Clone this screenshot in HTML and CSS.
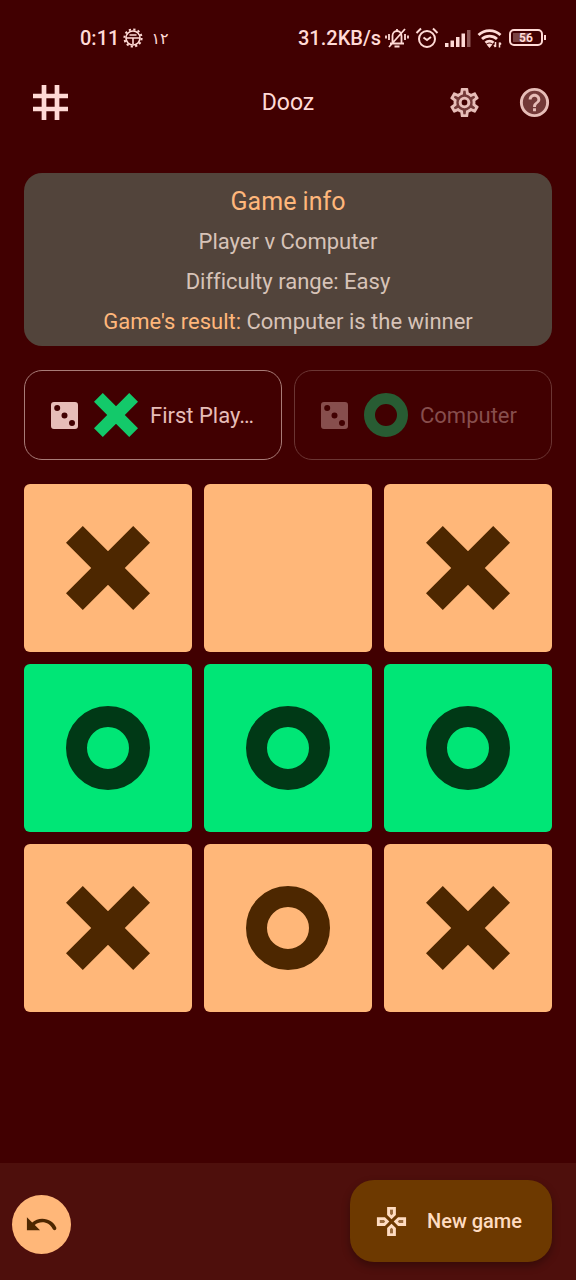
FILE: index.html
```html
<!DOCTYPE html>
<html lang="en">
<head>
<meta charset="utf-8">
<meta name="viewport" content="width=device-width, initial-scale=1">
<title>Dooz</title>
<link rel="stylesheet" href="styles.css">
</head>
<body>
<svg class="defs" aria-hidden="true">
  <symbol id="cross" viewBox="0 0 100 100"><path fill="currentColor" d="M20 0 50 30 80 0 100 20 70 50 100 80 80 100 50 70 20 100 0 80 30 50 0 20z"/></symbol>
  <symbol id="ring" viewBox="0 0 100 100"><circle cx="50" cy="50" r="37.5" fill="none" stroke="currentColor" stroke-width="25"/></symbol>
  <symbol id="dice" viewBox="0 0 27 27"><path fill="currentColor" fill-rule="evenodd" d="M3 0h21a3 3 0 0 1 3 3v21a3 3 0 0 1-3 3H3a3 3 0 0 1-3-3V3a3 3 0 0 1 3-3zM3.200 6a3 3 0 1 0 6 0a3 3 0 1 0-6 0zM10.500 13.500a3 3 0 1 0 6 0a3 3 0 1 0-6 0zM18 21a3 3 0 1 0 6 0a3 3 0 1 0-6 0z"/></symbol>
</svg>

<div class="status">
  <div class="status-group">
    <span class="clock">0:11</span>
    <svg class="status-gear" viewBox="0 0 20 20" fill="none" stroke="currentColor">
      <circle cx="10" cy="10" r="7" stroke-width="1.600"/>
      <circle cx="10" cy="10" r="8.600" stroke-width="2" stroke-dasharray="2.200 2.303"/>
      <path stroke-width="1.600" d="M3 10h14M10 10v6M6.500 7h7"/>
    </svg>
    <span class="date">۱۲</span>
  </div>
  <div class="status-group status-end">
    <span class="clock">31.2KB/s</span>
    <svg class="bell" viewBox="0 0 24 22" fill="none" stroke="currentColor" stroke-width="1.800">
      <path d="M5 16.500h14M7.500 16V9a4.500 5 0 0 1 9 0v7M12 4V2M4 20 20 2"/>
      <path d="M9.500 19.500h5" stroke-width="2"/>
      <path d="M4 7v6M1 8.500v3M20 7v6M23 8.500v3"/>
    </svg>
    <svg class="alarm" viewBox="0 0 24 22" fill="none" stroke="currentColor" stroke-width="2">
      <circle cx="12" cy="12" r="8"/>
      <path d="M1.500 6 6 1.500M22.500 6 18 1.500M8.500 10.500 12 13l4-3"/>
    </svg>
    <svg class="signal" viewBox="0 0 26 18" fill="currentColor">
      <path d="M0 14h3.500v4H0zM5.500 11.500H9V18H5.500zM11 8h3.500v10H11zM16.500 4.500H20V18h-3.500z"/>
      <path opacity=".4" d="M22 1h3.500v17H22z"/>
    </svg>
    <svg class="wifi" viewBox="0 0 26 20" fill="none" stroke="currentColor" stroke-width="2.800">
      <path d="M1.500 7a16 16 0 0 1 22 0M5 11a11 11 0 0 1 15 0M8.500 14.800a6 6 0 0 1 8 0"/>
      <path d="m9.500 16.500 3 3.500 3-3.500q-3-2-6 0z" fill="currentColor" stroke="none"/>
      <path d="M18.500 14v5M22.500 14.500v5M17 17l1.500 2M24 16.500l-1.500-2" stroke-width="1.500"/>
    </svg>
    <svg class="battery" viewBox="0 0 37 18">
      <rect x="1" y="1" width="32" height="15" rx="4" fill="none" stroke="currentColor" stroke-width="2"/>
      <rect x="4" y="4" width="15" height="9" fill="currentColor" opacity=".3"/>
      <path d="M35 6h2v5h-2z" fill="currentColor"/>
      <text x="17" y="13" text-anchor="middle" class="battery-text">56</text>
    </svg>
  </div>
</div>

<header class="appbar">
  <svg class="logo" viewBox="0 0 35 35" stroke="currentColor" stroke-width="4.700" role="img" aria-label="Dooz logo"><path d="M11 0v35M24 0v35M0 11h35M0 24h35"/></svg>
  <h1 class="title">Dooz</h1>
  <div class="actions">
    <button class="icon-button" aria-label="Settings">
      <svg class="icon" viewBox="0 0 24 24" fill="currentColor" fill-rule="evenodd">
        <path opacity=".3" d="M17.450 11.270c.04.31.05.52.05.73 0 .21-.02.43-.05.73l-.14 1.130.89.7 1.080.84-.7 1.210-1.270-.51-1.040-.42-.9.68c-.43.32-.84.56-1.250.73l-1.060.43-.16 1.130-.2 1.350h-1.400l-.19-1.350-.16-1.130-1.060-.43c-.43-.18-.83-.41-1.230-.71l-.91-.7-1.060.43-1.270.51-.7-1.210 1.080-.84.89-.7-.14-1.130c-.03-.31-.05-.54-.05-.74s.02-.43.05-.73l.14-1.130-.89-.7-1.080-.84.7-1.210 1.270.51 1.040.42.9-.68c.43-.32.84-.56 1.250-.73l1.060-.43.16-1.130.2-1.350h1.390l.19 1.350.16 1.130 1.060.43c.43.18.83.41 1.230.71l.91.7 1.060-.43 1.270-.51.7 1.210-1.070.85-.89.7zM10 12a2 2 0 1 0 4 0a2 2 0 1 0-4 0z"/>
        <path d="M19.430 12.980c.04-.32.07-.64.07-.98 0-.34-.03-.66-.07-.98l2.110-1.650c.19-.15.24-.42.12-.64l-2-3.460c-.09-.16-.26-.25-.44-.25-.06 0-.12.01-.17.03l-2.490 1c-.52-.4-1.080-.73-1.690-.98l-.38-2.650C14.460 2.180 14.250 2 14 2h-4c-.25 0-.46.18-.49.42l-.38 2.650c-.61.25-1.170.59-1.690.98l-2.490-1c-.06-.02-.12-.03-.18-.03-.17 0-.34.09-.43.25l-2 3.460c-.13.22-.07.49.12.64l2.110 1.650c-.04.32-.07.65-.07.98 0 .33.03.66.07.98l-2.110 1.650c-.19.15-.24.42-.12.64l2 3.460c.09.16.26.25.44.25.06 0 .12-.01.17-.03l2.490-1c.52.4 1.080.73 1.690.98l.38 2.650c.03.24.24.42.49.42h4c.25 0 .46-.18.49-.42l.38-2.650c.61-.25 1.170-.59 1.690-.98l2.490 1c.06.02.12.03.18.03.17 0 .34-.09.43-.25l2-3.460c.12-.22.07-.49-.12-.64l-2.110-1.650zM17.450 11.270c.04.31.05.52.05.73 0 .21-.02.43-.05.73l-.14 1.130.89.7 1.080.84-.7 1.210-1.270-.51-1.040-.42-.9.68c-.43.32-.84.56-1.250.73l-1.060.43-.16 1.130-.2 1.350h-1.400l-.19-1.350-.16-1.130-1.060-.43c-.43-.18-.83-.41-1.230-.71l-.91-.7-1.060.43-1.270.51-.7-1.210 1.080-.84.89-.7-.14-1.130c-.03-.31-.05-.54-.05-.74s.02-.43.05-.73l.14-1.130-.89-.7-1.080-.84.7-1.210 1.270.51 1.040.42.9-.68c.43-.32.84-.56 1.250-.73l1.060-.43.16-1.130.2-1.350h1.390l.19 1.350.16 1.130 1.060.43c.43.18.83.41 1.230.71l.91.7 1.060-.43 1.270-.51.7 1.210-1.070.85-.89.7z"/>
        <circle cx="12" cy="12" r="3" fill="none" stroke="currentColor" stroke-width="2"/>
      </svg>
    </button>
    <button class="icon-button" aria-label="Help">
      <svg class="icon" viewBox="0 0 24 24" fill="currentColor">
        <circle cx="12" cy="12" r="8.500" opacity=".3"/>
        <circle cx="12" cy="12" r="9" fill="none" stroke="currentColor" stroke-width="2"/>
        <path d="M11 16h2v2h-2zM12 6c-2.210 0-4 1.790-4 4h2c0-1.100.9-2 2-2s2 .9 2 2c0 2-3 1.750-3 5h2c0-2.250 3-2.500 3-5 0-2.210-1.790-4-4-4z"/>
      </svg>
    </button>
  </div>
</header>

<main class="content">
  <section class="info">
    <h2 class="info-title">Game info</h2>
    <p class="info-line">Player v Computer</p>
    <p class="info-line">Difficulty range: Easy</p>
    <p class="info-line"><span class="accent">Game's result:</span> Computer is the winner</p>
  </section>

  <section class="players">
    <div class="player">
      <svg class="dice"><use href="#dice"/></svg>
      <svg class="mark"><use href="#cross"/></svg>
      <span class="player-name">First Play…</span>
    </div>
    <div class="player player-idle">
      <svg class="dice"><use href="#dice"/></svg>
      <svg class="mark"><use href="#ring"/></svg>
      <span class="player-name">Computer</span>
    </div>
  </section>

  <section class="board" aria-label="Board">
    <button class="cell" aria-label="X"><svg class="piece"><use href="#cross"/></svg></button>
    <button class="cell" aria-label="Empty"></button>
    <button class="cell" aria-label="X"><svg class="piece"><use href="#cross"/></svg></button>
    <button class="cell cell-win" aria-label="O"><svg class="piece"><use href="#ring"/></svg></button>
    <button class="cell cell-win" aria-label="O"><svg class="piece"><use href="#ring"/></svg></button>
    <button class="cell cell-win" aria-label="O"><svg class="piece"><use href="#ring"/></svg></button>
    <button class="cell" aria-label="X"><svg class="piece"><use href="#cross"/></svg></button>
    <button class="cell" aria-label="O"><svg class="piece"><use href="#ring"/></svg></button>
    <button class="cell" aria-label="X"><svg class="piece"><use href="#cross"/></svg></button>
  </section>
</main>

<footer class="bottombar">
  <button class="undo" aria-label="Undo">
    <svg class="icon" viewBox="0 0 24 24" fill="currentColor"><path d="M12.500 8c-2.650 0-5.050.99-6.900 2.600L2 7v9h9l-3.620-3.620c1.390-1.160 3.160-1.880 5.120-1.880 3.200 0 5.900 1.850 7.200 4.600.8 1.600 3 .6 2.400-1C20.700 10.500 17 8 12.500 8z"/></svg>
  </button>
  <button class="new-game">
    <svg class="icon" viewBox="0 0 24 24" fill="currentColor" fill-rule="evenodd">
      <path opacity=".3" d="M13 4v2.670l-1 1-1-1V4zM20 11v2h-2.670l-1-1 1-1zM6.670 11l1 1-1 1H4v-2zM12 16.330l1 1V20h-2v-2.670z"/>
      <path d="M15 2H9v5.500l3 3 3-3zM22 9h-5.500l-3 3 3 3H22zM7.500 9H2v6h5.500l3-3zM12 13.500l-3 3V22h6v-5.500zM13 4v2.670l-1 1-1-1V4zM20 11v2h-2.670l-1-1 1-1zM6.670 11l1 1-1 1H4v-2zM12 16.330l1 1V20h-2v-2.670z"/>
    </svg>
    <span>New game</span>
  </button>
</footer>
</body>
</html>
```
FILE: styles.css
```css
* { box-sizing: border-box; }

body {
  margin: 0;
  min-height: 100vh;
  display: flex;
  flex-direction: column;
  background: #410001;
  color: #ffdad6;
  font-family: Roboto, "Noto Sans", "DejaVu Sans", sans-serif;
  font-size: 22px;
  font-variant-ligatures: none;
}

h1, h2, p { margin: 0; font-weight: 400; }
svg { display: block; flex: none; }
button {
  border: 0;
  padding: 0;
  background: none;
  color: inherit;
  font: inherit;
  cursor: pointer;
}
.defs { display: none; }
.icon { width: 35px; height: 35px; }

/* Status bar */
.status {
  display: flex;
  justify-content: space-between;
  padding: 24px 30px 0 80px;
  height: 64px;
}
.status-group {
  display: flex;
  align-items: center;
  height: 28px;
  gap: 4px;
}
.status-end { gap: 6px; }
.clock { font-size: 20px; font-weight: 500; }
.status-end .clock { margin-right: -2px; }
.date { font-size: 16px; margin-left: 4px; }
.status-gear { width: 20px; height: 20px; }
.bell { width: 24px; height: 22px; }
.alarm { width: 24px; height: 22px; }
.signal { width: 26px; height: 18px; }
.wifi { width: 26px; height: 20px; }
.battery { width: 37px; height: 18px; }
.battery-text { fill: currentColor; font-size: 12px; font-weight: 700; }

/* App bar */
.appbar {
  display: grid;
  grid-template-columns: 1fr auto 1fr;
  align-items: center;
  height: 77px;
  padding: 0 24px;
}
.logo { width: 35px; height: 35px; margin-left: 9px; }
.title { font-size: 23px; }
.actions {
  display: flex;
  justify-content: flex-end;
  gap: 35px;
  color: #e7bdb8;
}

/* Content */
.content {
  flex: 1;
  display: flex;
  flex-direction: column;
  gap: 24px;
  padding: 32px 24px 24px;
}
.info {
  display: flex;
  flex-direction: column;
  gap: 12px;
  padding: 14px 16px 10px;
  border-radius: 18px;
  background: #52443b;
  color: #d7c3b8;
  text-align: center;
}
.info-title { font-size: 25px; line-height: 29px; color: #ffb77b; }
.info-line { line-height: 28px; }
.accent { color: #ffb77b; }

.players {
  display: grid;
  grid-template-columns: 1fr 1fr;
  gap: 12px;
}
.player {
  display: flex;
  align-items: center;
  height: 90px;
  padding: 0 20px 0 26px;
  border: 1px solid #a87b77;
  border-radius: 18px;
  color: #e7bdb8;
}
.player-idle { border-color: #6b3533; color: #874e4d; }
.dice { width: 27px; height: 27px; margin-right: 16px; }
.mark { width: 44px; height: 44px; margin-right: 12px; color: #13c96a; }
.player-idle .mark { color: #285c33; }
.player-name { white-space: nowrap; }

.board {
  display: grid;
  grid-template-columns: repeat(3, 1fr);
  gap: 12px;
}
.cell {
  display: grid;
  place-items: center;
  aspect-ratio: 1;
  border-radius: 6px;
  background: #ffb779;
  color: #4d2700;
}
.cell-win { background: #00e676; color: #003916; }
.piece { width: 50%; height: 50%; }

/* Bottom bar */
.bottombar {
  display: flex;
  align-items: flex-end;
  justify-content: space-between;
  padding: 17px 24px 18px 12px;
  background: #4e0f0c;
}
.undo {
  display: grid;
  place-items: center;
  width: 59px;
  height: 59px;
  margin-bottom: 8px;
  border-radius: 50%;
  background: #ffb779;
  color: #4d2700;
}
.new-game {
  display: flex;
  align-items: center;
  gap: 18px;
  height: 82px;
  padding: 0 30px 0 24px;
  border-radius: 24px;
  background: #6d3900;
  color: #ffdcc1;
  font-size: 20px;
  font-weight: 500;
  box-shadow: 0 4px 8px rgba(0, 0, 0, .3);
}
```
